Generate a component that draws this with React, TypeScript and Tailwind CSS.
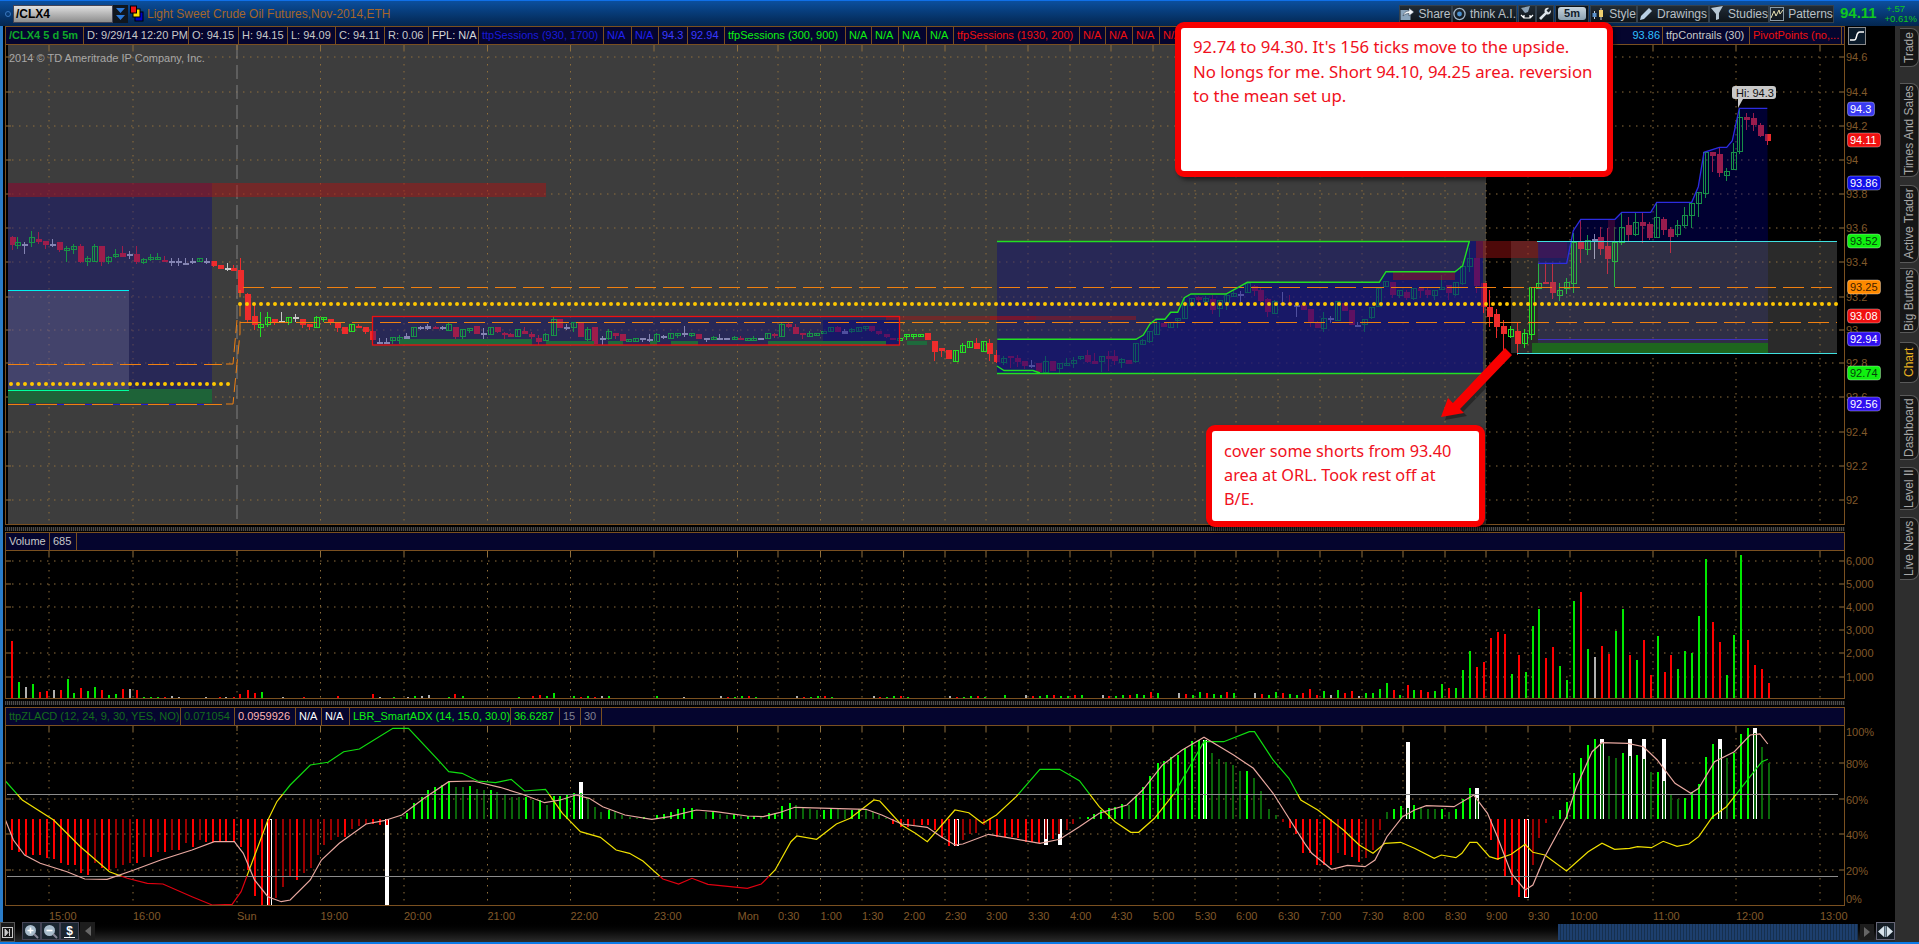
import React from "react";

type C = { x: number; wT: number; wB: number; bT: number; bB: number; c: string };
const parse = (s: string, fx: (n: number) => number, fy: (n: number) => number): C[] =>
  s.trim().split("|").map((r) => {
    const p = r.trim().split(" ");
    return { x: fx(+p[0]), wT: fy(+p[1]), wB: fy(+p[2]), bT: fy(+p[3]), bB: fy(+p[4]), c: p[5] };
  });

const z4 = `35 198 240 202 225 r|52 202 236 216 224 g|73 215 251 222 226 w|94 183 230 202 218 g|115 186 222 207 215 r|136 213 236 213 224 r|157 208 230 222 227 w|178 216 245 217 240 r|199 228 276 235 240 g|220 222 252 228 236 g|241 222 280 228 275 r|262 257 288 265 275 g|283 222 274 228 272 g|304 228 288 228 275 r|325 258 282 260 273 g|346 237 265 253 260 g|367 228 262 249 261 r|388 243 266 253 257 w|407 228 282 252 275 r|428 265 282 266 276 g|449 253 272 260 266 g|470 250 268 260 266 g|491 258 275 271 275 r|512 265 288 272 277 w|533 265 288 272 277 w|554 265 285 280 285 w|575 265 282 272 279 w|596 265 275 265 273 g|617 265 282 272 279 w|638 273 290 273 287 r|659 285 297 285 297 r|680 279 302 293 299 w|700 285 303 294 303 r|721 265 370 300 368 r|742 370 455 372 450 r|763 405 480 438 465 r|781 427 500 462 471 g|802 427 470 442 464 g|823 447 465 447 458 r|844 427 457 453 456 w|865 442 465 442 458 g|886 433 456 441 447 w|907 447 473 447 464 r|928 462 480 462 470 r|949 437 472 441 471 g|970 442 457 442 448 g|991 447 465 447 457 r|1012 459 485 459 473 r|1033 470 492 471 491 r|1054 462 486 463 485 g|1075 462 475 467 473 r|1096 470 492 471 486 r|1117 482 512 484 510 r`;
const z10 = `66 143 160 155 160 w|82 143 160 155 160 w|98 140 162 140 150 g|114 135 162 140 148 g|130 128 150 138 146 w|146 112 142 112 140 g|162 108 120 112 117 w|178 103 120 108 116 w|195 108 118 110 115 r|211 108 120 112 117 w|227 100 122 103 120 g|243 110 148 110 140 r|259 118 148 118 140 g|275 113 130 113 118 g|291 108 132 108 132 r|307 115 155 130 135 w|323 112 135 112 134 g|340 112 130 112 126 r|355 125 148 130 134 r|370 128 140 133 141 r|386 118 142 118 140 g|402 112 132 123 132 r|418 125 148 133 142 r|434 135 165 145 156 r|450 130 150 133 150 g|467 82 135 88 135 g|483 88 115 88 115 r|499 102 120 110 117 w|515 95 125 97 113 g|531 97 142 98 140 r|547 110 153 118 147 g|563 112 162 112 162 r|580 138 165 143 150 w|596 118 150 124 146 g|612 128 146 130 140 r|628 132 155 133 155 r|642 148 155 148 155 g|658 145 155 145 155 g|674 145 155 145 150 w|690 132 155 148 152 w|706 130 158 133 155 g|722 135 148 138 143 w|738 128 148 130 146 g|755 128 145 130 134 g|771 108 140 130 134 w|787 128 140 130 134 g|803 132 148 132 146 r|820 143 155 145 150 w|836 138 148 140 146 g|852 132 150 145 149 w|868 143 150 145 149 w|885 138 148 140 146 g|900 138 150 145 149 r|915 143 150 145 149 g|930 138 150 145 149 g|946 143 150 145 149 w|962 128 148 130 146 g|978 130 145 133 140 r|995 100 142 103 140 g|1011 100 115 103 113 r|1027 102 133 110 132 r|1043 128 148 130 134 r|1059 122 140 130 140 g|1075 128 135 130 134 g|1091 122 132 123 130 g|1107 110 126 112 125 g|1124 108 125 110 125 r|1139 118 132 122 130 w|1155 115 130 118 124 g|1171 110 125 112 124 g|1187 107 123 109 113 g|1202 108 125 109 125 r|1218 122 135 124 134 r|1235 132 145 133 142 r|1250 143 150 145 149 r|1267 143 150 145 149 g|1283 132 150 133 139 g|1299 132 148 133 139 g|1315 132 142 133 139 g|1331 129 150 129 150 r|1347 153 212 153 186 r|1363 175 200 175 183 r|1380 180 207 180 207 r|1396 180 212 180 212 g|1412 160 185 165 185 g|1428 153 175 153 170 g|1444 145 178 160 177 r|1460 153 182 153 182 g|1474 148 212 160 192 r`;
const z11 = `18 360 400 375 395 r|40 378 405 385 396 g|61 378 413 379 386 r|82 375 410 384 396 r|103 392 418 393 407 r|124 390 413 405 409 w|145 398 428 400 428 r|166 378 428 394 428 g|187 392 423 393 422 r|208 398 428 400 416 g|229 385 408 400 406 g|250 380 415 391 400 g|271 378 390 379 386 g|292 360 398 376 396 r|313 370 402 393 401 r|334 378 425 379 395 g|355 362 422 378 387 r|373 360 406 378 392 r|394 385 413 386 396 g|415 390 402 391 402 r|436 340 400 340 395 g|457 328 342 329 341 g|478 303 340 303 333 g|499 270 312 275 310 g|520 278 292 278 290 r|541 275 293 276 290 g|562 263 294 264 270 g|583 203 264 220 264 g|604 203 230 203 225 g|625 198 232 202 211 r|646 198 222 204 212 g|667 195 252 208 240 r|688 210 262 211 234 g|709 192 240 196 218 g|730 183 202 189 197 g|749 183 215 192 198 w|770 157 190 160 188 g|791 165 197 167 181 r|811 175 215 181 213 r|832 205 262 208 248 r|853 210 250 212 248 g|875 186 226 218 224 w|896 195 225 218 225 r|917 222 262 225 227 w|938 220 240 226 240 r|959 238 292 238 280 r|980 273 295 278 294 r|1000 245 305 263 293 g|1021 258 278 263 267 w|1042 212 272 212 270 g|1063 218 243 218 243 r|1084 240 285 240 285 r|1102 275 292 284 288 w|1123 268 305 268 284 g|1144 232 268 232 263 g|1165 173 230 173 228 g|1186 152 167 152 167 g|1207 156 204 156 195 r|1228 180 203 181 196 g|1249 180 210 186 204 r|1270 175 210 175 204 g|1291 172 205 175 183 r|1312 175 205 181 196 r|1333 180 210 181 196 g|1354 136 178 172 175 g|1375 165 210 165 188 r|1396 155 198 157 193 g|1417 107 165 107 158 g|1438 55 125 85 110 g|1459 84 190 84 167 r|1478 160 248 160 233 r`;
const z12 = `28 600 710 652 682 r|49 657 745 672 710 r|70 690 785 708 732 r|91 708 745 718 740 g|112 698 795 724 762 r|133 717 775 730 760 g|154 592 750 592 734 g|175 520 592 578 592 g|196 520 582 575 582 r|217 520 628 576 608 r|238 580 632 600 614 g|259 564 612 577 594 g|280 430 608 455 578 g|301 390 520 456 477 r|322 435 495 449 476 g|343 432 507 447 452 w|361 410 495 441 478 r|382 415 552 468 507 r|403 410 592 456 512 g|424 370 464 412 456 g|445 382 455 405 434 r|466 368 438 397 434 g|487 370 458 396 408 r|508 396 450 402 444 r|529 340 445 382 442 g|550 382 435 388 420 r|571 412 490 418 441 r|592 390 440 406 434 g|613 352 415 376 407 g|634 342 415 340 376 g|655 305 382 305 338 g|676 187 325 187 310 g|697 187 245 187 200 r|718 175 260 192 250 r|737 235 272 244 256 g|758 160 238 187 238 g|778 55 192 82 185 g|799 68 120 82 92 r|820 70 122 85 107 r|841 100 140 105 137 r|862 132 165 132 152 r`;
const candles: C[] = [
  ...parse(z4, (x) => x / 3, (y) => y / 3 + 170),
  ...parse(z10, (x) => x / 2.306 + 350, (y) => y / 3 + 290),
  ...parse(z11, (x) => x / 3 + 990, (y) => y / 3 + 230),
  ...parse(z12, (x) => x / 3 + 1480, (y) => y / 3 + 90),
];

const volL = `24 r 366|41 g 489|56 w 504|71 g 495|87 r 519|103 r 516|118 w 513|134 r 513|150 g 480|164 g 522|179 r 507|195 g 516|210 g 504|226 r 513|241 g 528|257 g 525|273 r 510|289 w 510|304 r 513|320 g 534|336 g 534|351 g 534|367 r 534|383 w 531|398 w 534|460 w 534|490 r 534|505 w 534|521 r 534|535 r 525|553 r 513|569 r 522|584 g 519|631 w 534|678 r 534|755 r 531|833 r 525|848 w 534|880 g 534|911 w 534|927 g 531|942 w 531|958 w 528|1003 g 534|1018 r 525|1034 g 531|1160 g 534|1191 r 531|1207 r 528|1222 g 531|1238 g 522|1283 g 531|1299 r 534|1315 g 531|1331 r 534|1346 w 531|1362 g 531|1470 g 531|1531 w 534`;
const volR = `5 r 522|22 r 510|40 r 528|58 g 516|75 w 528|93 g 513|111 r 522|128 r 516|146 w 531|164 g 522|182 g 522|199 g 510|217 g 492|235 r 513|252 g 528|270 r 498|287 g 513|305 r 513|322 r 519|340 g 516|357 g 495|375 r 507|392 g 507|410 g 453|428 g 396|446 r 444|463 r 429|481 r 357|498 r 339|516 r 345|534 g 465|552 r 408|569 g 459|587 g 321|604 g 270|621 r 417|638 r 384|656 g 441|673 g 483|691 g 246|709 r 219|727 g 390|744 w 414|762 r 381|780 r 405|798 g 336|815 g 270|833 r 408|851 g 423|868 r 363|886 r 468|904 g 351|921 r 459|938 r 408|956 g 450|972 g 396|990 g 402|1008 g 291|1025 g 120|1043 r 309|1061 r 369|1079 g 468|1096 g 348|1114 g 108|1132 r 363|1150 r 438|1168 r 450|1185 r 492`;
type V = { x: number; h: number; c: string };
const pV = (s: string, fx: (n: number) => number): V[] =>
  s.split("|").map((r) => {
    const p = r.split(" ");
    return { x: fx(+p[0]), c: p[1], h: (538 - +p[2]) / 3 };
  });
const volMid: V[] = [];
for (let i = 0; i < 87; i++) {
  const x = 699 + i * 6.94;
  const k = (i * 7919 + 13) % 11;
  if (x < 1000 ? k < 5 : k < 2) continue;
  const base = x > 1130 ? 3 : x > 1000 ? 2 : 1;
  volMid.push({ x, h: base + (k % 4) * (x > 1130 ? 1 : 0.5), c: k % 3 === 0 ? "r" : k === 10 ? "w" : "g" });
}
const vols: V[] = [...pV(volL, (x) => x / 2.24), ...volMid, ...pV(volR, (x) => 1300 + x / 2.533)];
const volColor: Record<string, string> = { r: "#ff0000", g: "#00e800", w: "#b0b0b0" };

const hist7 = `24:450,40:455,56:465,72:465,87:465,103:475,118:478,134:490,150:495,165:495,180:520,195:525,210:490,226:505,241:510,257:505,273:495,289:490,304:490,320:470,336:470,351:455,367:455,382:450,398:450,414:430,430:440,445:420,460:425,476:425,490:425,505:425,521:425,537:440,553:510,569:588,584:615,600:615,615:595,631:560,647:530,663:540,678:520,694:505,710:465,724:435,740:420,755:410,770:410,786:387,802:378,818:372,833:372,848:375,864:375,895:350,910:340,925:310,942:290,957:270,973:260,988:255,1003:245,1019:260,1034:262,1050:258,1066:268,1082:270,1097:270,1112:275,1128:285,1145:290,1160:292,1176:290,1192:300,1207:300,1222:315,1238:288,1253:288,1268:285,1284:278,1300:278,1315:295,1330:320,1345:335,1361:330,1376:332,1392:345,1408:350,1424:353,1440:350,1470:345,1485:342,1500:335,1516:328,1531:325,1547:323`;
const hist9 = `12:335,30:335,47:342,65:345,83:342,100:347,118:347,135:347,153:350,171:340,188:340,206:318,224:310,241:316,258:325,276:328,294:330,311:330,329:325,346:328,364:330,381:330,399:328,417:330,434:335,451:345,469:353,487:372,505:380,523:380,540:375,558:375,575:375,592:390,610:415,627:438,645:438,662:420,680:403,697:400,715:375,732:390,750:410,768:410,786:410,803:415,821:425,838:425,856:430,873:418,890:418,907:403,925:390,942:373,960:352,978:350,995:343,1013:330,1031:325,1048:320,1066:312,1083:315,1101:288,1119:262,1137:228,1155:190,1172:183,1189:170,1207:165,1224:145,1241:123,1259:120,1276:120,1293:160,1311:178,1329:185,1347:195,1364:213,1382:213,1400:235,1418:272,1436:328,1454:345,1472:365,1489:385,1505:403`;
const hist8 = `5:1000,22:1000,40:1035,58:1035,75:1035,93:1000,111:1005,128:1010,146:1025,164:1015,182:990,200:930,217:877,235:867,253:858,270:865,287:855,305:860,322:866,340:868,357:868,375:875,392:866,410:838,428:805,446:835,463:897,481:960,498:1020,516:1068,534:1095,552:1130,570:1130,587:1035,604:955,621:908,639:888,656:870,674:847,691:760,709:715,727:675,744:657,762:670,780:708,798:715,815:700,833:708,851:705,868:718,886:755,904:755,920:783,938:825,956:838,972:835,990:815,1008:792,1025:710,1043:672,1061:688,1079:715,1096:700,1114:642,1132:624,1150:640,1168:680,1185:730`;
type H = { x: number; v: number };
const pH = (s: string, fx: (n: number) => number, fy: (n: number) => number): H[] =>
  s.split(",").map((r) => {
    const [a, b] = r.split(":");
    return { x: fx(+a), v: 819 - fy(+b) };
  });
const hist: H[] = [
  ...pH(hist7, (x) => x / 2.24, (y) => 700 + y / 3),
  ...pH(hist9, (x) => 700 + x / 2.53, (y) => 700 + y / 3),
  ...pH(hist8, (x) => 1300 + x / 2.533, (y) => 520 + y / 3),
].sort((a, b) => a.x - b.x);

const pl = (s: string, fx: (n: number) => number, fy: (n: number) => number) =>
  s.trim().split(" ").map((r) => {
    const [a, b] = r.split(",");
    return `${fx(+a).toFixed(1)},${fy(+b).toFixed(1)}`;
  }).join(" ");
const f7x = (x: number) => x / 2.24;
const f9x = (x: number) => 700 + x / 2.53;
const f8x = (x: number) => 1300 + x / 2.533;
const f7y = (y: number) => 700 + y / 3;
const f8y = (y: number) => 520 + y / 3;

const lineA = [
  pl("12,243 50,300 120,360 180,440 245,515 285,535 330,550 365,552 430,590 475,615 520,613 540,575 600,360 620,305 650,255 695,195 735,187 770,155 805,147 880,85 915,85 985,185 1005,215 1035,220 1070,243 1110,248 1145,238 1175,273 1222,268 1260,340 1300,395 1345,412 1380,450 1410,460 1440,483 1485,537 1520,552 1550,535", f7x, f7y),
  pl("20,553 120,565 155,552 190,510 230,425 245,408 295,418 345,372 380,355 440,300 455,303 510,375 545,400 575,425 645,330 680,338 715,370 750,345 800,290 860,208 910,208 960,242 1010,320 1050,365 1090,397 1110,397 1150,355 1200,280 1275,125 1325,125 1390,95 1403,95 1450,180 1490,235 1520,300", f9x, f7y),
  pl("45,870 110,930 150,975 185,1000 215,970 255,967 290,985 340,1015 358,1005 395,1013 410,1000 430,967 448,967 480,1010 500,1017 535,1003 570,973 590,997 620,1005 675,1053 730,995 765,970 797,988 835,985 855,980 890,983 920,964 955,979 985,972 1010,950 1045,890 1080,860 1100,830 1150,755 1170,725 1185,718", f8x, f8y),
].join(" ");
const lineP = [
  pl("12,360 30,420 55,465 90,490 150,515 190,537 240,538 300,510 360,480 430,450 480,425 525,425 545,460 570,540 600,590 630,605 650,600 695,540 720,480 760,430 820,372 860,362 900,345 950,295 1005,245 1060,243 1120,262 1170,283 1220,308 1255,300 1290,285 1320,295 1350,320 1400,345 1460,358 1500,350 1560,330", f7x, f7y),
  pl("40,335 120,348 160,350 200,338 240,322 330,325 420,328 460,345 510,372 575,382 610,410 645,435 665,432 730,403 860,430 910,418 960,380 1010,340 1080,315 1120,270 1170,195 1220,150 1275,112 1350,165 1400,205 1450,280 1490,355 1530,430", f9x, f7y),
  pl("30,1000 80,1048 120,1036 165,1040 190,1020 220,950 260,890 290,870 320,857 390,860 440,825 475,880 500,950 535,1060 570,1110 590,1095 620,1010 675,890 700,800 740,695 765,668 830,670 870,680 905,720 950,790 990,820 1010,805 1050,725 1100,695 1140,645 1165,642 1185,672", f8x, f8y),
].join(" ");

const whites: [number, number, number, boolean][] = [
  [268, 819, 905, true], [386, 819, 905, false], [580, 782, 819, false], [955, 819, 845, true],
  [1045, 819, 845, false], [1058.5, 819, 845, false], [1204, 740, 819, false], [1406.6, 742, 819, false],
  [1476, 788, 819, false], [1525, 819, 897, true], [1601, 739, 819, false], [1629, 739, 819, false],
  [1643, 739, 819, false], [1663, 739, 819, false], [1719, 739, 819, false], [1754, 728, 819, false],
];

const ticksV = [49, 133, 320.5, 404, 487.5, 570.5, 654, 737.5, 778, 820.5, 862, 903.6, 945, 986, 1028, 1070, 1111, 1153, 1195, 1236, 1278, 1320, 1362, 1403, 1445, 1486, 1528, 1570, 1653, 1736, 1820];
const timeLabels: [number, string][] = [[49, "15:00"], [133, "16:00"], [237, "Sun"], [320.5, "19:00"], [404, "20:00"], [487.5, "21:00"], [570.5, "22:00"], [654, "23:00"], [737.5, "Mon"], [778, "0:30"], [820.5, "1:00"], [862, "1:30"], [903.6, "2:00"], [945, "2:30"], [986, "3:00"], [1028, "3:30"], [1070, "4:00"], [1111, "4:30"], [1153, "5:00"], [1195, "5:30"], [1236, "6:00"], [1278, "6:30"], [1320, "7:00"], [1362, "7:30"], [1403, "8:00"], [1445, "8:30"], [1486, "9:00"], [1528, "9:30"], [1570, "10:00"], [1653, "11:00"], [1736, "12:00"], [1820, "13:00"]];

const GRID = "#8f6f3c";
const Grid = ({ top, bottom, ys, sun }: { top: number; bottom: number; ys: number[]; sun?: boolean }) => (
  <g>
    {ys.map((y) => (
      <g key={y}>
        <line x1={12} x2={1838} y1={y} y2={y} stroke={GRID} strokeWidth={1} strokeDasharray="1.5 5.5" />
        <line x1={6} x2={11} y1={y} y2={y} stroke={GRID} />
        <line x1={1839} x2={1844} y1={y} y2={y} stroke={GRID} />
      </g>
    ))}
    {ticksV.map((x) => (
      <g key={x}>
        <line x1={x} x2={x} y1={top + 5} y2={bottom} stroke={GRID} strokeDasharray="1.5 5.5" />
        <line x1={x} x2={x} y1={top} y2={top + 5} stroke={GRID} />
      </g>
    ))}
    <line x1={237} x2={237} y1={top} y2={bottom} stroke={sun ? "#808080" : GRID} strokeDasharray={sun ? "14 6" : "1.5 5.5"} />
    <line x1={237} x2={237} y1={top} y2={top + 5} stroke={GRID} />
  </g>
);

const AXIS = "#80592a";
const AxisText = ({ y, t }: { y: number; t: string }) => (
  <text x={1846} y={y + 4} fontSize={11} fill={AXIS}>{t}</text>
);

const Candle = ({ d }: { d: C }) => {
  const x = Math.round(d.x);
  const col = d.c === "r" ? "#ee2c2c" : d.c === "g" ? "#25e025" : "#c8c8c8";
  const t = Math.round(d.bT);
  const h = Math.max(1.5, Math.round(d.bB - d.bT));
  return (
    <g shapeRendering="crispEdges">
      <line x1={x + 0.5} x2={x + 0.5} y1={d.wT} y2={d.wB} stroke={col} />
      {d.c === "g" ? (
        <rect x={x - 2} y={t + 0.5} width={5} height={h} fill="none" stroke={col} />
      ) : (
        <rect x={x - 2} y={t} width={6} height={h} fill={col} />
      )}
    </g>
  );
};

const badges: [number, string, string, string, number][] = [
  [109, "94.3", "#3a3af0", "#ffffff", 1874],
  [140, "94.11", "#f01010", "#ffffff", 1880],
  [183, "93.86", "#1010e8", "#ffffff", 1880],
  [241, "93.52", "#10f010", "#04400a", 1880],
  [287, "93.25", "#ff8a00", "#402000", 1880],
  [316, "93.08", "#f01010", "#ffffff", 1880],
  [339, "92.94", "#3010f0", "#ffffff", 1880],
  [373, "92.74", "#10f010", "#04400a", 1880],
  [404, "92.56", "#3010f0", "#ffffff", 1880],
];

const MainChart = () => {
  const stepGreen = pl("22,328 438,328 460,315 480,282 498,268 525,268 542,247 563,247 583,203 603,192 708,192 745,172 772,157 1168,157 1188,125 1395,125 1418,107 1438,34", (x) => x / 3 + 990, (y) => y / 3 + 230);
  const bluePts = pl("175,520 260,520 280,422 302,388 405,388 425,367 512,367 530,337 635,337 655,290 672,187 718,172 740,172 757,152 778,55 862,55", (x) => x / 3 + 1480, (y) => y / 3 + 90);
  const prices: [number, string][] = [[57, "94.6"], [92, "94.4"], [126, "94.2"], [160, "94"], [194, "93.8"], [228, "93.6"], [262, "93.4"], [297, "93.2"], [330, "93"], [363, "92.8"], [397, "92.6"], [432, "92.4"], [466, "92.2"], [500, "92"]];
  const ov = "rgba(0,0,135,0.34)";
  return (
    <svg className="block shrink-0" width={1890} height={480} viewBox="5 45 1890 480">
      <rect x={5} y={45} width={1890} height={480} fill="#000" />
      <rect x={8} y={45} width={1478} height={480} fill="#3d3d3d" />
      <rect x={1511} y={241} width={326} height={112} fill="#2a2a2a" />
      <Grid top={45} bottom={524} ys={prices.map((p) => p[0])} sun />
      {candles.map((d, i) => <Candle key={i} d={d} />)}

      <rect x={8} y={183} width={204} height={220} fill={ov} />
      <rect x={8} y={290} width={121} height={100} fill="rgba(255,255,255,0.13)" />
      <rect x={8} y={389} width={204} height={14} fill="#1e6338" />
      <rect x={8} y={183} width={538} height={14} fill="rgba(170,20,20,0.5)" />
      <rect x={372} y={316} width={528} height={29} fill={ov} />
      <rect x={823} y={320} width={77} height={25} fill="rgba(0,0,130,0.4)" />
      <rect x={886} y={316} width={150} height={4} fill="rgba(170,20,20,0.45)" />
      {[[400, 132, 339], [546, 48, 341], [608, 15, 341], [650, 7, 341], [671, 27, 341], [768, 118, 341], [907, 20, 341]].map(([x, w, y]) => (
        <rect key={x} x={x} y={y} width={w} height={345 - y} fill="#1e6a3c" />
      ))}
      <rect x={997} y={241} width={486} height={132} fill={ov} />
      <polygon points={`997,373 ${stepGreen} 1483,241 1483,373`} fill="rgba(0,0,130,0.4)" />
      <rect x={990} y={316} width={146} height={4} fill="rgba(170,20,20,0.45)" />
      <rect x={1393} y={272} width={62} height={8} fill="rgba(170,20,20,0.45)" />
      <rect x={1476} y={241} width={91} height={17} fill="rgba(170,20,20,0.45)" />
      <rect x={1608} y={219} width={7} height={22} fill="rgba(170,20,20,0.45)" />
      <rect x={1538} y={241} width={230} height={102} fill="rgba(60,60,140,0.28)" />
      <polygon points={`1538,241 ${bluePts} 1768,241`} fill="rgba(0,0,135,0.36)" />
      <rect x={1532} y={343} width={236} height={10} fill="#1e661e" />

      <line x1={8} x2={129} y1={290.5} y2={290.5} stroke="#00f0f0" />
      <line x1={8} x2={129} y1={390.5} y2={390.5} stroke="#00ffa0" />
      <line x1={8} x2={222} y1={364.5} y2={364.5} stroke="#f08010" strokeDasharray="21 7" />
      <line x1={8} x2={222} y1={404.5} y2={404.5} stroke="#2020d0" />
      <line x1={8} x2={222} y1={404.5} y2={404.5} stroke="#f08010" strokeDasharray="21 7" />
      <polyline points="226,364 233,364 237,320" fill="none" stroke="#f08010" strokeDasharray="14 5" />
      <polyline points="226,404 233,404 240,333 240,290" fill="none" stroke="#f08010" strokeDasharray="14 5" />
      <line x1={243} x2={1837} y1={287.5} y2={287.5} stroke="#f08010" strokeDasharray="21 7" />
      <line x1={240} x2={1837} y1={322.5} y2={322.5} stroke="#f08010" strokeDasharray="21 7" />

      <rect x={372.5} y={316.5} width={527} height={28.5} fill="none" stroke="#ee1010" strokeWidth={1.3} />
      <line x1={997} x2={1470} y1={241.5} y2={241.5} stroke="#22e022" strokeWidth={1.4} />
      <line x1={997} x2={1483} y1={373.5} y2={373.5} stroke="#22e022" strokeWidth={1.4} />
      <polyline points={stepGreen} fill="none" stroke="#22e022" strokeWidth={1.4} />
      <polyline points="997,366 1004,370.5 1033,370.5 1040,373" fill="none" stroke="#22e022" strokeWidth={1.4} />
      <polyline points={bluePts} fill="none" stroke="#2c2ce0" strokeWidth={1.3} />
      <line x1={1538} x2={1768} y1={339.5} y2={339.5} stroke="#4030c0" />
      <line x1={1537} x2={1837} y1={241.5} y2={241.5} stroke="#40e0e0" />
      <line x1={1517} x2={1837} y1={353.5} y2={353.5} stroke="#40e0e0" />

      <line x1={11} x2={233} y1={384} y2={384} stroke="#ffc800" strokeWidth={4} strokeLinecap="round" strokeDasharray="0 7" />
      <line x1={240} x2={1837} y1={304} y2={304} stroke="#ffc800" strokeWidth={4} strokeLinecap="round" strokeDasharray="0 7" />

      <text x={9} y={62} fontSize={11} fill="#a8a8a8">2014 © TD Ameritrade IP Company, Inc.</text>

      <path d="M1735 86h38a3 3 0 0 1 3 3v7a3 3 0 0 1-3 3h-30l-5 9 0-9h-3a3 3 0 0 1-3-3v-7a3 3 0 0 1 3-3z" fill="#c8c8c8" />
      <text x={1736} y={97} fontSize={11} fill="#111">Hi: 94.3</text>

      {prices.map(([y, t]) => <AxisText key={t} y={y} t={t} />)}
      {badges.map(([y, t, bg, fg, r]) => (
        <g key={t}>
          <rect x={1847.5} y={y - 7} width={r - 1847} height={14} rx={3} fill={bg} stroke="rgba(255,255,255,0.35)" />
          <text x={1850} y={y + 4} fontSize={11} fill={fg}>{t}</text>
        </g>
      ))}
      <line x1={5.5} x2={5.5} y1={45} y2={525} stroke="#7a5020" />
      <line x1={1844.5} x2={1844.5} y1={45} y2={525} stroke="#7a5020" />
      <line x1={5} x2={1845} y1={524.5} y2={524.5} stroke="#7a5020" />
    </svg>
  );
};

const VolumePane = () => (
  <svg className="block shrink-0" width={1890} height={148} viewBox="5 551 1890 148">
    <Grid top={551} bottom={699} ys={[561, 584, 607, 630, 653, 677]} />
    {vols.map((v, i) => (
      <rect key={i} x={Math.round(v.x)} y={698 - v.h} width={2} height={v.h} fill={volColor[v.c]} shapeRendering="crispEdges" />
    ))}
    {[[561, "6,000"], [584, "5,000"], [607, "4,000"], [630, "3,000"], [653, "2,000"], [677, "1,000"]].map(([y, t]) => (
      <AxisText key={t as string} y={y as number} t={t as string} />
    ))}
    <line x1={5} x2={1845} y1={698.5} y2={698.5} stroke="#7a5020" />
    <line x1={5.5} x2={5.5} y1={551} y2={699} stroke="#7a5020" />
    <line x1={1844.5} x2={1844.5} y1={551} y2={699} stroke="#7a5020" />
  </svg>
);

const IndicatorPane = () => (
  <svg className="block shrink-0" width={1890} height={180} viewBox="5 726 1890 180">
    <defs>
      <clipPath id="hi"><rect x={0} y={700} width={1900} height={94} /></clipPath>
      <clipPath id="mid"><rect x={0} y={794} width={1900} height={82} /></clipPath>
      <clipPath id="lo"><rect x={0} y={876} width={1900} height={40} /></clipPath>
    </defs>
    <Grid top={726} bottom={905} ys={[763, 799, 834, 870]} />
    {whites.map(([x, a, b, hollow]) => (
      <rect key={x} x={Math.round(x) - 1} y={a} width={4} height={b - a} fill={hollow ? "#000" : "#fff"} stroke={hollow ? "#fff" : "none"} shapeRendering="crispEdges" />
    ))}
    {hist.map((h, i) => {
      const prev = i > 0 ? Math.abs(hist[i - 1].v) : 0;
      const grow = Math.abs(h.v) >= prev - 0.5;
      const col = h.v >= 0 ? (grow ? "#00ff00" : "#0a660a") : grow ? "#ff0000" : "#990000";
      const len = Math.abs(h.v);
      return <rect key={i} x={Math.round(h.x)} y={h.v >= 0 ? 819 - len : 819} width={2} height={len} fill={col} shapeRendering="crispEdges" />;
    })}
    <line x1={7} x2={1838} y1={794.5} y2={794.5} stroke="#8c8c8c" />
    <line x1={7} x2={1838} y1={876.5} y2={876.5} stroke="#8c8c8c" />
    <polyline points={lineA} fill="none" stroke="#10dd10" strokeWidth={1.2} clipPath="url(#hi)" />
    <polyline points={lineA} fill="none" stroke="#f0e000" strokeWidth={1.2} clipPath="url(#mid)" />
    <polyline points={lineA} fill="none" stroke="#e00010" strokeWidth={1.2} clipPath="url(#lo)" />
    <polyline points={lineP} fill="none" stroke="#e8a8a0" strokeWidth={1.2} />
    {[[732, "100%"], [764, "80%"], [800, "60%"], [835, "40%"], [871, "20%"], [899, "0%"]].map(([y, t]) => (
      <AxisText key={t as string} y={y as number} t={t as string} />
    ))}
    <line x1={5} x2={1845} y1={905.5} y2={905.5} stroke="#7a5020" />
    <line x1={5.5} x2={5.5} y1={726} y2={906} stroke="#7a5020" />
    <line x1={1844.5} x2={1844.5} y1={726} y2={906} stroke="#7a5020" />
  </svg>
);

type Cell = { t: string; w: string; c: string; b?: boolean };
const mainCells: Cell[] = [
  { t: "/CLX4 5 d 5m", w: "w-[78px]", c: "text-[#0fa82a]", b: true },
  { t: "D: 9/29/14 12:20 PM", w: "w-[105px]", c: "text-[#c8c8c8]" },
  { t: "O: 94.15", w: "w-[50px]", c: "text-[#c8c8c8]" },
  { t: "H: 94.15", w: "w-[49px]", c: "text-[#c8c8c8]" },
  { t: "L: 94.09", w: "w-[48px]", c: "text-[#c8c8c8]" },
  { t: "C: 94.11", w: "w-[49px]", c: "text-[#c8c8c8]" },
  { t: "R: 0.06", w: "w-[44px]", c: "text-[#c8c8c8]" },
  { t: "FPL: N/A", w: "w-[50px]", c: "text-[#d8d8d8]" },
  { t: "ttpSessions (930, 1700)", w: "w-[125px]", c: "text-[#1a1ad8]" },
  { t: "N/A", w: "w-[28px]", c: "text-[#2020f0]" },
  { t: "N/A", w: "w-[27px]", c: "text-[#2020f0]" },
  { t: "94.3", w: "w-[29px]", c: "text-[#3a3aff]" },
  { t: "92.94", w: "w-[37px]", c: "text-[#3a3aff]" },
  { t: "tfpSessions (300, 900)", w: "w-[121px]", c: "text-[#10f010]" },
  { t: "N/A", w: "w-[26px]", c: "text-[#10f010]" },
  { t: "N/A", w: "w-[27px]", c: "text-[#10f010]" },
  { t: "N/A", w: "w-[28px]", c: "text-[#10f010]" },
  { t: "N/A", w: "w-[27px]", c: "text-[#10f010]" },
  { t: "tfpSessions (1930, 200)", w: "w-[126px]", c: "text-[#f01010]" },
  { t: "N/A", w: "w-[26px]", c: "text-[#f01010]" },
  { t: "N/A", w: "w-[27px]", c: "text-[#f01010]" },
  { t: "N/A", w: "w-[27px]", c: "text-[#f01010]" },
  { t: "N/A", w: "w-[27px]", c: "text-[#f01010]" },
];
const volCells: Cell[] = [
  { t: "Volume", w: "w-[44px]", c: "text-[#c8c8c8]" },
  { t: "685", w: "w-[27px]", c: "text-[#c8c8c8]" },
];
const indCells: Cell[] = [
  { t: "ttpZLACD (12, 24, 9, 30, YES, NO)", w: "w-[175px]", c: "text-[#156c1c]" },
  { t: "0.071054", w: "w-[54px]", c: "text-[#156c1c]" },
  { t: "0.0959926", w: "w-[61px]", c: "text-[#ffb4b4]" },
  { t: "N/A", w: "w-[26px]", c: "text-white" },
  { t: "N/A", w: "w-[28px]", c: "text-white" },
  { t: "LBR_SmartADX (14, 15.0, 30.0)", w: "w-[161px]", c: "text-[#10f010]" },
  { t: "36.6287", w: "w-[49px]", c: "text-[#10f010]" },
  { t: "15", w: "w-[21px]", c: "text-[#808090]" },
  { t: "30", w: "w-[21px]", c: "text-[#808090]" },
];
const Cells = ({ cells }: { cells: Cell[] }) => (
  <>
    {cells.map((c, i) => (
      <div key={i} className={`${c.w} ${c.c} ${c.b ? "font-bold" : ""} shrink-0 h-full border-r border-[#7a5020] pl-[3px] flex items-center whitespace-nowrap overflow-hidden`}>
        {c.t}
      </div>
    ))}
  </>
);
const LEGEND = "flex h-[19px] w-[1840px] shrink-0 border-y border-l border-r border-[#7a5020] bg-[#05052e] text-[11px]";

const Hatch = () => (
  <div className="h-[7px] w-[1840px] shrink-0 bg-black flex items-center">
    <div className="h-[4px] w-full bg-[repeating-linear-gradient(90deg,#4a4a4a_0px,#4a4a4a_1px,#151515_1px,#151515_2px)]" />
  </div>
);

const Tool = ({ children, w }: { children: React.ReactNode; w: string }) => (
  <div className={`${w} h-[18px] shrink-0 flex items-center justify-center gap-[4px] border border-[#33414f] bg-gradient-to-b from-[#222c36] to-[#0e141a] text-[12px] text-[#b9c0c6] whitespace-nowrap`}>
    {children}
  </div>
);

const tabs: { t: string; cls: string; active?: boolean }[] = [
  { t: "Trade", cls: "h-[39px] mt-[2px]" },
  { t: "Times And Sales", cls: "h-[94px] mt-[16px]" },
  { t: "Active Trader", cls: "h-[78px] mt-[8px]" },
  { t: "Big Buttons", cls: "h-[65px] mt-[5px]" },
  { t: "Chart", cls: "h-[41px] mt-[9px]", active: true },
  { t: "Dashboard", cls: "h-[65px] mt-[12px]" },
  { t: "Level II", cls: "h-[43px] mt-[7px]" },
  { t: "Live News", cls: "h-[63px] mt-[7px]" },
];

export default function App() {
  return (
    <div className="relative w-[1919px] h-[944px] overflow-hidden bg-black font-['Liberation_Sans',Arial,sans-serif] flex flex-col">
      {/* top bar */}
      <div className="h-[26px] shrink-0 flex items-center border-t border-[#1070e8] bg-gradient-to-b from-[#0b4f9e] to-[#04264f]">
        <div className="ml-[5px] w-[6px] h-[6px] rounded-full border border-[#3a78c0] shrink-0" />
        <div className="ml-[2px] w-[100px] h-[18px] flex items-center pl-[2px] bg-gradient-to-b from-[#e0e0e0] to-[#8e8e8e] border border-[#445] text-[12px] font-bold text-black">/CLX4</div>
        <div className="w-[15px] h-[18px] bg-[#10161e] flex items-center justify-center shrink-0">
          <svg width="11" height="14" viewBox="0 0 11 14"><path d="M1 1h9L5.5 6zM1 8h9l-4.5 5z" fill="#2a78d8" /></svg>
        </div>
        <svg className="ml-[2px] shrink-0" width="14" height="18" viewBox="0 0 14 18">
          <rect x="5" y="7" width="8" height="9" fill="#0000c8" stroke="#000" />
          <rect x="3" y="4" width="7" height="8" fill="#ffe000" stroke="#000" />
          <rect x="0.5" y="1" width="6" height="7" fill="#f01010" stroke="#000" />
        </svg>
        <div className="ml-[3px] text-[12px] text-[#a5662a] whitespace-nowrap">Light Sweet Crude Oil Futures,Nov-2014,ETH</div>
        <div className="ml-auto flex items-center">
          <Tool w="w-[53px]">
            <svg width="14" height="14" viewBox="0 0 14 14"><rect x="0.5" y="3" width="10" height="10" fill="#8aa4bc" /><path d="M3 9c1-4 4-5 6-5V1l5 4-5 4V6.5C7 6.5 5 7 3 9z" fill="#f0f4f8" stroke="#234" strokeWidth=".5" /></svg>
            Share
          </Tool>
          <Tool w="w-[65px]">
            <svg width="14" height="14" viewBox="0 0 14 14"><circle cx="7" cy="7" r="6" fill="none" stroke="#9fb4c8" strokeWidth="1.4" /><circle cx="7" cy="7" r="2.6" fill="#4a90d0" /></svg>
            think A.I.
          </Tool>
          <Tool w="w-[18px] ml-[1px]">
            <svg width="14" height="15" viewBox="0 0 14 15"><path d="M1 2l9-2-2 6-3 1z" fill="#8aa0b4" /><path d="M1 9l3 3M13 9l-3 3M4 9v3h3M10 9v3H7" stroke="#fff" strokeWidth="1.2" fill="none" /></svg>
          </Tool>
          <Tool w="w-[18px]">
            <svg width="14" height="14" viewBox="0 0 14 14"><path d="M13 3l-2.5 2.5L8.5 3.5 11 1c-2-.7-4.5.4-4.5 3 0 .7.1 1 .3 1.5L1 11l2 2 5.5-5.8c2.5 1 5-1 4.5-4.2z" fill="#dce4ea" /></svg>
          </Tool>
          <div className="w-[34px] h-[18px] mx-[1px] shrink-0 bg-[#0c1218] border border-[#33414f] flex items-center justify-center">
            <div className="w-[28px] h-[13px] rounded-[3px] bg-gradient-to-b from-[#c8d4dc] to-[#8aa0b0] text-[11px] font-bold text-[#10202c] flex items-center justify-center">5m</div>
          </div>
          <Tool w="w-[47px]">
            <svg width="14" height="14" viewBox="0 0 14 14"><path d="M3.5 4v8M10 1v12" stroke="#c8d0d8" /><rect x="1.5" y="6" width="4" height="4" fill="#5a90c8" /><rect x="8" y="3" width="4" height="7" fill="#f0d070" /></svg>
            Style
          </Tool>
          <Tool w="w-[72px]">
            <svg width="14" height="14" viewBox="0 0 14 14"><path d="M1 13l1-4 8-8 3 3-8 8z" fill="#b8cfe4" /></svg>
            Drawings
          </Tool>
          <Tool w="w-[60px]">
            <svg width="14" height="15" viewBox="0 0 14 15"><path d="M1 2l12-2-4 7v6l-3 1V8z" fill="#b8c8d4" /></svg>
            Studies
          </Tool>
          <Tool w="w-[65px]">
            <svg width="14" height="14" viewBox="0 0 14 14"><rect x=".5" y=".5" width="13" height="13" fill="none" stroke="#8a9aa6" /><path d="M1 11l3-7 2 5 3-6 1 4 3-4" fill="none" stroke="#e8e0b0" /></svg>
            Patterns
          </Tool>
          <div className="ml-[6px] w-[42px] text-[15px] font-bold text-[#10c820]">94.11</div>
          <div className="w-[37px] pr-[2px] text-[9.5px] leading-[10px] text-[#10c820] text-right">
            <div className="pr-[12px]">+.57</div>
            <div>+0.61%</div>
          </div>
        </div>
      </div>

      {/* body */}
      <div className="flex flex-1 min-h-0">
        <div className="w-[5px] shrink-0 flex">
          <div className="w-[3px] bg-[#2a7cc8]" />
        </div>
        <div className="w-[1890px] shrink-0 flex flex-col">
          <div className="flex items-center shrink-0">
            <div className={LEGEND}>
              <Cells cells={mainCells} />
              <div className="w-[476px] shrink-0 h-full border-r border-[#7a5020] pr-[2px] flex items-center justify-end text-[#30c0ff]">93.86</div>
              <div className="w-[87px] shrink-0 h-full border-r border-[#7a5020] pl-[3px] flex items-center text-[#c8c8c8] whitespace-nowrap">tfpContrails (30)</div>
              <div className="w-[92px] shrink-0 h-full border-r border-[#7a5020] pl-[3px] flex items-center text-[#f01010] whitespace-nowrap">PivotPoints (no,...</div>
            </div>
            <div className="ml-[3px] w-[18px] h-[18px] border border-[#8a8a8a] bg-[#0a1a2a] flex items-center justify-center shrink-0">
              <svg width="16" height="14" viewBox="0 0 16 14"><path d="M1 11h4C9 11 6 3 11 3h4" fill="none" stroke="#fff" strokeWidth="1.5" /></svg>
            </div>
          </div>
          <MainChart />
          <Hatch />
          <div className={LEGEND}><Cells cells={volCells} /></div>
          <VolumePane />
          <div className="h-[8px] shrink-0 flex items-start"><Hatch /></div>
          <div className={LEGEND}><Cells cells={indCells} /></div>
          <IndicatorPane />
          <div className="flex-1 flex flex-col bg-gradient-to-b from-black from-40% to-[#2c2c2c]">
            <svg className="block shrink-0" width={1890} height={16} viewBox="5 906 1890 16">
              {timeLabels.map(([x, t]) => (
                <text key={t} x={x} y={920} fontSize={11} fill={AXIS}>{t}</text>
              ))}
            </svg>
            <div className="flex items-start h-[20px] -ml-[5px]">
              <div className="w-[15px] h-[20px] bg-[#181818] border border-[#555] flex items-center justify-center">
                <svg width="11" height="11" viewBox="0 0 11 11"><rect x=".5" y=".5" width="10" height="10" fill="none" stroke="#ccc" /><path d="M3 2l3 3.5-3 3.5zM7.5 2v7" stroke="#ccc" fill="#ccc" /></svg>
              </div>
              <div className="ml-[7px] flex">
                <div className="w-[19px] h-[18px] bg-[#1a2530] border border-[#445] flex items-center justify-center">
                  <svg width="15" height="15" viewBox="0 0 15 15"><circle cx="6.5" cy="6.5" r="5.5" fill="#a8bccc" /><path d="M3.5 6.5h6M6.5 3.5v6" stroke="#fff" strokeWidth="1.6" /><path d="M10 10l4 4" stroke="#889" strokeWidth="2" /></svg>
                </div>
                <div className="w-[19px] h-[18px] bg-[#1a2530] border border-[#445] flex items-center justify-center">
                  <svg width="15" height="15" viewBox="0 0 15 15"><circle cx="6.5" cy="6.5" r="5.5" fill="#a8bccc" /><path d="M3.5 6.5h6" stroke="#fff" strokeWidth="1.6" /><path d="M10 10l4 4" stroke="#889" strokeWidth="2" /></svg>
                </div>
                <div className="w-[19px] h-[18px] bg-[#1a2530] border border-[#445] flex flex-col items-center justify-center text-[12px] leading-[12px] font-bold text-white">
                  <span>$</span>
                  <div className="w-[11px] h-[1px] bg-white" />
                </div>
                <div className="ml-[1px] w-[15px] h-[18px] bg-[#1d1d1d] flex items-center justify-center">
                  <svg width="6" height="10" viewBox="0 0 6 10"><path d="M6 0v10L0 5z" fill="#666" /></svg>
                </div>
              </div>
              <div className="ml-auto flex items-start">
                <div className="w-[300px] h-[16px] mt-[2px] bg-[repeating-linear-gradient(90deg,#1d3f6e_0px,#1d3f6e_2px,#16304f_2px,#16304f_3px)]" />
                <div className="ml-[2px] mt-[2px] w-[14px] h-[16px] bg-[#1d1d1d] flex items-center justify-center">
                  <svg width="6" height="10" viewBox="0 0 6 10"><path d="M0 0v10l6-5z" fill="#666" /></svg>
                </div>
                <div className="ml-[2px] w-[19px] h-[18px] bg-[#141c24] border border-[#667] flex items-center justify-center">
                  <svg width="15" height="11" viewBox="0 0 15 11"><path d="M6 0v11L0 5.5zM9 0v11l6-5.5z" fill="#d8e4ec" /><rect x="6.5" width="2" height="11" fill="#8aa0b0" /></svg>
                </div>
              </div>
            </div>
          </div>
        </div>
        <div className="flex-1 flex flex-col items-end bg-[#2e2e2e] h-full">
          {tabs.map((t) => (
            <div key={t.t} className={`${t.cls} w-[19px] shrink-0 rounded-l-[8px] border border-r-0 border-[#5a5a5a] bg-[#161616] flex items-center justify-center text-[12px] whitespace-nowrap [writing-mode:vertical-rl] rotate-180 ${t.active ? "text-[#e8b020]" : "text-[#a8a8a8]"}`}>
              {t.t}
            </div>
          ))}
        </div>
      </div>
      <div className="h-[2px] shrink-0 bg-[#0a7ae8]" />

      {/* annotations */}
      <div className="absolute left-[1175px] top-[22px] w-[438px] h-[155px] rounded-[9px] border-[6px] border-[#f80000] bg-white pl-[12px] pt-[7px] font-['Noto_Sans',sans-serif] text-[16.8px] leading-[24.5px] text-[#f01020] shadow-[3px_3px_4px_rgba(0,0,0,0.5)]">
        <div className="whitespace-nowrap">92.74 to 94.30. It's 156 ticks move to the upside.</div>
        <div className="whitespace-nowrap">No longs for me. Short 94.10, 94.25 area. reversion</div>
        <div className="whitespace-nowrap">to the mean set up.</div>
      </div>
      <div className="absolute left-[1206px] top-[425px] w-[279px] h-[102px] rounded-[9px] border-[6px] border-[#f80000] bg-white pl-[12px] pt-[8px] font-['Noto_Sans',sans-serif] text-[16.3px] leading-[24px] text-[#f01020] shadow-[3px_3px_4px_rgba(0,0,0,0.5)]">
        <div className="whitespace-nowrap">cover some shorts from 93.40</div>
        <div className="whitespace-nowrap">area at ORL. Took rest off at</div>
        <div className="whitespace-nowrap">B/E.</div>
      </div>
      <svg className="absolute left-[1430px] top-[340px]" width="90" height="90" viewBox="1430 340 90 90">
        <polygon points="1442,417 1448,398 1453,403 1505,348 1512,355 1460,409 1464,413" fill="#000" opacity="0.35" transform="translate(3 3)" />
        <polygon points="1441,417 1448,398 1453,403 1505,348 1512,355 1460,409 1464,413" fill="#f80000" />
      </svg>
    </div>
  );
}
